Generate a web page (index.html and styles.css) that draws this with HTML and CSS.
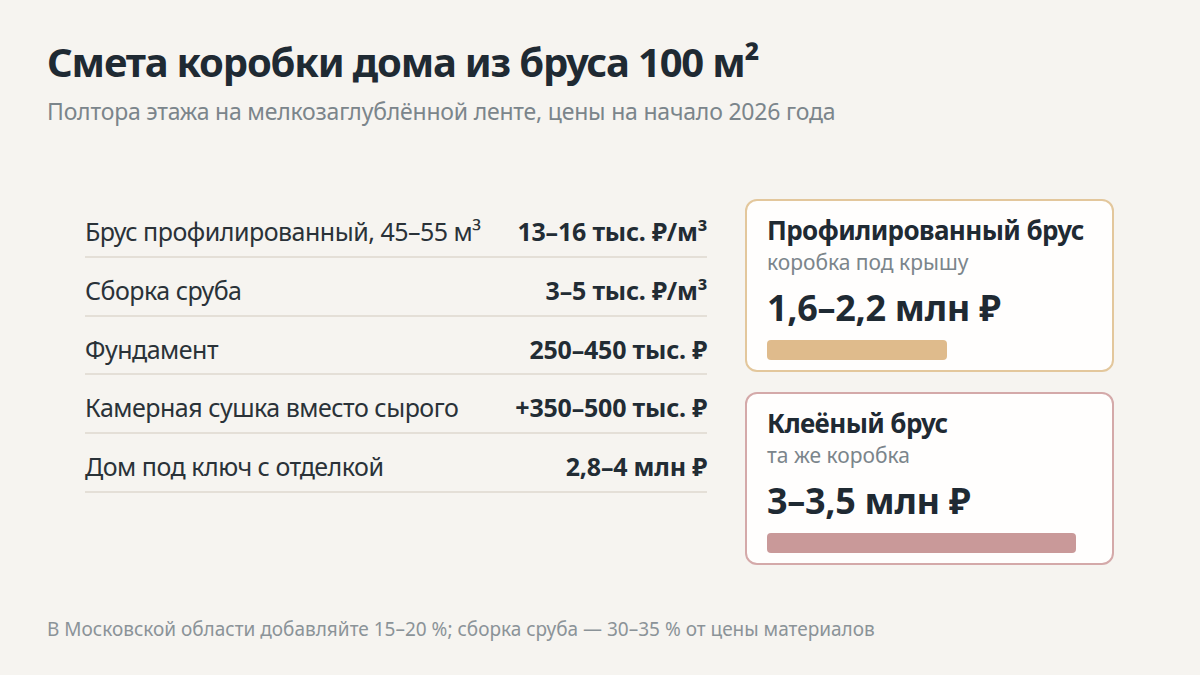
FILE: index.html
```html
<!DOCTYPE html>
<html lang="ru">
<head>
<meta charset="utf-8">
<link rel="stylesheet" href="styles.css">
</head>
<body>
<div class="page">
  <header class="head">
    <h1 class="title">Смета коробки дома из бруса 100 м²</h1>
    <p class="subtitle">Полтора этажа на мелкозаглублённой ленте, цены на начало 2026 года</p>
  </header>
  <main class="main">
    <div class="table">
      <div class="row"><span class="label">Брус профилированный, 45–55 м³</span><span class="value">13–16 тыс. ₽/м³</span></div>
      <div class="row"><span class="label">Сборка сруба</span><span class="value">3–5 тыс. ₽/м³</span></div>
      <div class="row"><span class="label">Фундамент</span><span class="value">250–450 тыс. ₽</span></div>
      <div class="row"><span class="label">Камерная сушка вместо сырого</span><span class="value">+350–500 тыс. ₽</span></div>
      <div class="row"><span class="label">Дом под ключ с отделкой</span><span class="value">2,8–4 млн ₽</span></div>
    </div>
    <div class="cards">
      <div class="card card-profile">
        <div class="card-title">Профилированный брус</div>
        <div class="card-sub">коробка под крышу</div>
        <div class="card-value">1,6–2,2 млн ₽</div>
        <div class="bar bar-profile" style="width:180px"></div>
      </div>
      <div class="card card-glued">
        <div class="card-title">Клеёный брус</div>
        <div class="card-sub">та же коробка</div>
        <div class="card-value">3–3,5 млн ₽</div>
        <div class="bar bar-glued" style="width:309px"></div>
      </div>
    </div>
  </main>
  <footer class="foot">В Московской области добавляйте 15–20 %; сборка сруба — 30–35 % от цены материалов</footer>
</div>
</body>
</html>
```

FILE: styles.css
```css
* { box-sizing: border-box; }
html, body { margin: 0; padding: 0; }
body {
  background: #f6f4f0;
  font-family: "Noto Sans", "Open Sans", sans-serif;
  color: #222c34;
  width: 1200px;
  height: 675px;
  overflow: hidden;
}
.page {
  height: 675px;
  display: flex;
  flex-direction: column;
  padding: 37px 47px 0 47px;
}
.title {
  margin: 0;
  font-size: 40px;
  font-weight: 700;
  line-height: 50px;
  letter-spacing: -1.2px;
  color: #1f2a33;
}
.subtitle {
  margin: 8px 0 0 0;
  font-size: 23px;
  line-height: 32px;
  letter-spacing: -0.2px;
  color: #7b858b;
}
.main {
  display: flex;
  align-items: flex-start;
  gap: 38px;
  margin: 72px 39px 0 38px;
}
.table {
  width: 622px;
  flex: none;
  display: flex;
  flex-direction: column;
}
.row {
  display: flex;
  justify-content: space-between;
  align-items: baseline;
  padding: 15px 0 7.75px 0;
  border-bottom: 2px solid #e4dfd7;
  font-size: 25px;
  line-height: 34px;
  white-space: nowrap;
}
.label { color: #2a3238; letter-spacing: -0.5px; }
.value { font-weight: 700; color: #222c34; letter-spacing: -0.2px; }
.cards {
  width: 369px;
  flex: none;
  display: flex;
  flex-direction: column;
  gap: 20px;
}
.card {
  background: #fffefd;
  border: 2px solid #e3c79c;
  border-radius: 12px;
  padding: 12px 20px 10px 20px;
}
.card-glued { border-color: #d4a9a9; }
.card-title {
  font-size: 26px;
  font-weight: 700;
  line-height: 34px;
  letter-spacing: -0.6px;
  color: #1f2a33;
  white-space: nowrap;
}
.card-sub {
  margin-top: 1px;
  font-size: 21px;
  line-height: 28px;
  color: #7b858b;
}
.card-value {
  font-size: 36px;
  font-weight: 700;
  line-height: 44px;
  letter-spacing: -0.3px;
  color: #1f2a33;
  margin-top: 10px;
}
.bar {
  height: 20px;
  border-radius: 4px;
  margin-top: 10px;
}
.bar-profile { background: #dfbb8c; }
.bar-glued { background: #c99999; }
.foot {
  margin-top: auto;
  margin-bottom: 33px;
  font-size: 19px;
  line-height: 26px;
  color: #8b9398;
}
```
